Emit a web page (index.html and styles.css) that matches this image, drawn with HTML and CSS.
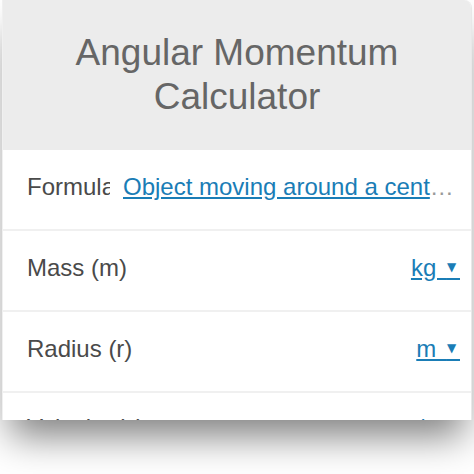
FILE: index.html
```html
<!DOCTYPE html>
<html>
<head>
    <title>Angular Momentum Calculator</title>
    <link rel="stylesheet" href="styles.css">
</head>
<body>
    <div class="card">
        <div class="header">
            <h1>Angular Momentum<br>Calculator</h1>
        </div>

        <div class="row">
            <span class="label formula-label">Formula</span>
            <a class="formula-link" href="#"><span class="link-text">Object moving around a central point</span></a>
        </div>

        <div class="row">
            <span class="label">Mass (m)</span>
            <a class="unit" href="#">kg <span class="caret">&#9660;&nbsp;</span></a>
        </div>

        <div class="row">
            <span class="label">Radius (r)</span>
            <a class="unit" href="#">m <span class="caret">&#9660;&nbsp;</span></a>
        </div>

        <div class="row last-row">
            <span class="label">Velocity (v)</span>
            <a class="unit" href="#">m/s <span class="caret">&#9660;&nbsp;</span></a>
        </div>
    </div>
</body>
</html>
```

FILE: styles.css
```css
body {
    margin: 0;
    padding: 0;
    min-height: 100vh;
    background: white;
    font-family: "Liberation Sans", Arial, sans-serif;
}

.card {
    margin: 0 2px;
    height: 420px;
    overflow: hidden;
    background: white;
    border-right: 1px solid #e8e8e8;
    border-left: 1px solid #f0f0f0;
    border-radius: 0 8px 0 0;
    box-shadow: 0 24px 36px -8px rgba(0,0,0,0.5);
}

.header {
    height: 150px;
    background: #ececec;
    display: flex;
    align-items: center;
    justify-content: center;
}

.header h1 {
    margin: 0;
    font-size: 37px;
    line-height: 44px;
    font-weight: normal;
    color: #666;
    text-align: center;
}

.row {
    height: 73px;
    padding: 0 11px 6px 24px;
    display: flex;
    align-items: center;
    justify-content: space-between;
    border-bottom: 2px solid #f0f0f0;
}

/* only the top of this row shows above the fold */
.last-row {
    height: 69px;
    padding-bottom: 10px;
}

.label {
    font-size: 24px;
    color: #4a4a4a;
    white-space: nowrap;
}

.formula-label {
    width: 83px;
    flex-shrink: 0;
    overflow: hidden;
}

.formula-link {
    flex: 1;
    min-width: 0;
    margin-left: 13px;
    font-size: 24px;
    color: #999;
    white-space: nowrap;
    overflow: hidden;
    text-overflow: ellipsis;
    text-decoration: none;
}

.link-text {
    color: #1a7db6;
    text-decoration: underline;
    text-underline-offset: 2px;
}

.unit {
    font-size: 24px;
    color: #1a7db6;
    text-decoration: underline;
    text-underline-offset: 2px;
    white-space: nowrap;
    word-spacing: 4px;
}

.caret {
    font-family: "DejaVu Sans", sans-serif;
    font-size: 12px;
    vertical-align: 5px;
    word-spacing: 0;
}
```
